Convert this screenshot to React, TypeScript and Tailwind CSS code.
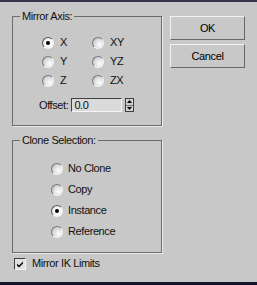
function Radio({ checked }: { checked?: boolean }) {
  return (
    <span
      className={
        checked
          ? "flex h-[12px] w-[12px] shrink-0 items-center justify-center rounded-full border border-t-[#5c5c5c] border-l-[#5c5c5c] border-r-[#f4f4f4] border-b-[#f4f4f4] bg-[radial-gradient(circle_at_60%_60%,#ffffff_0%,#f2f2f2_55%,#c4c4c4_100%)]"
          : "flex h-[12px] w-[12px] shrink-0 items-center justify-center rounded-full border border-t-[#7a7a7a] border-l-[#7a7a7a] border-r-[#f4f4f4] border-b-[#f4f4f4] bg-[radial-gradient(circle_at_65%_65%,#ffffff_0%,#e2e2e2_45%,#b0b0b0_100%)]"
      }
    >
      {checked && <span className="h-[4px] w-[4px] rounded-full bg-black" />}
    </span>
  );
}

function RadioItem({ label, checked, gap }: { label: string; checked?: boolean; gap: string }) {
  return (
    <div className={"flex items-center " + gap}>
      <Radio checked={checked} />
      <span>{label}</span>
    </div>
  );
}

function Button({ children }: { children: string }) {
  return (
    <button className="flex h-[24px] w-[75px] items-center justify-center border border-t-[#f2f2f2] border-l-[#f2f2f2] border-r-[#686868] border-b-[#686868] bg-[#c8c8c8] text-[11px] text-black">
      {children}
    </button>
  );
}

export default function App() {
  return (
    <div className="flex h-[285px] w-[257px] flex-col border-t-[2px] border-[#34344a] bg-[#c8c8c8] font-['Liberation_Sans',Arial,sans-serif] text-[11px] leading-[13px] tracking-[-0.4px] text-[#111111]">
      <div className="flex px-[12px] pt-[8px]">
        {/* linke Spalte */}
        <div className="flex w-[150px] flex-col">
          <fieldset className="border border-[#6c6c6c] pb-[13px] shadow-[1px_1px_0_#ececec]">
            <legend className="ml-[7px] px-[2px]">Mirror Axis:</legend>
            <div className="grid grid-cols-[50px_auto] pl-[29px] pt-[10px]">
              <div className="flex h-[19px] items-center gap-[6px]">
                <Radio checked />
                <span>X</span>
              </div>
              <RadioItem label="XY" gap="gap-[6px] h-[19px]" />
              <RadioItem label="Y" gap="gap-[6px] h-[19px]" />
              <RadioItem label="YZ" gap="gap-[6px] h-[19px]" />
              <RadioItem label="Z" gap="gap-[6px] h-[19px]" />
              <RadioItem label="ZX" gap="gap-[6px] h-[19px]" />
            </div>
            <div className="mt-[8px] flex items-center pl-[26px]">
              <span>Offset:</span>
              <div className="ml-[3px] flex h-[14px] w-[51px] items-center border border-t-[#404040] border-l-[#404040] border-r-[#f4f4f4] border-b-[#f4f4f4] bg-[#dadada] pl-[2px]">
                0.0
              </div>
              <div className="ml-[3px] flex h-[14px] w-[9px] flex-col border border-[#404040] bg-[#d0d0d0]">
                <div className="flex flex-1 items-center justify-center border-b border-[#707070]">
                  <svg width="5" height="3" viewBox="0 0 5 3">
                    <path d="M2.5 0 L5 3 L0 3 Z" fill="#000" />
                  </svg>
                </div>
                <div className="flex flex-1 items-center justify-center">
                  <svg width="5" height="3" viewBox="0 0 5 3">
                    <path d="M0 0 L5 0 L2.5 3 Z" fill="#000" />
                  </svg>
                </div>
              </div>
            </div>
          </fieldset>

          <fieldset className="mt-[8px] border border-[#6c6c6c] pb-[10px] shadow-[1px_1px_0_#ececec]">
            <legend className="ml-[7px] px-[2px]">Clone Selection:</legend>
            <div className="flex flex-col pl-[38px] pt-[11px]">
              <RadioItem label="No Clone" gap="gap-[5px] h-[21px]" />
              <RadioItem label="Copy" gap="gap-[5px] h-[21px]" />
              <div className="flex h-[21px] items-center gap-[5px]">
                <Radio checked />
                <span>Instance</span>
              </div>
              <RadioItem label="Reference" gap="gap-[5px] h-[21px]" />
            </div>
          </fieldset>
        </div>

        {/* Buttons */}
        <div className="ml-[8px] flex flex-col gap-[4px] pt-[6px]">
          <Button>OK</Button>
          <Button>Cancel</Button>
        </div>
      </div>

      <div className="mt-[4px] flex items-center gap-[6px] pl-[14px]">
        <span className="flex h-[12px] w-[12px] items-center justify-center border border-t-[#404040] border-l-[#404040] border-r-[#f4f4f4] border-b-[#f4f4f4] bg-[#e2e2e2]">
          <svg width="8" height="8" viewBox="0 0 8 8">
            <path d="M1 3.5 L3 5.5 L7 1.5 L7 3.5 L3 7.5 L1 5.5 Z" fill="#000" />
          </svg>
        </span>
        <span>Mirror IK Limits</span>
      </div>

      <div className="mt-auto h-[3px] bg-[#14142a]" />
    </div>
  );
}
